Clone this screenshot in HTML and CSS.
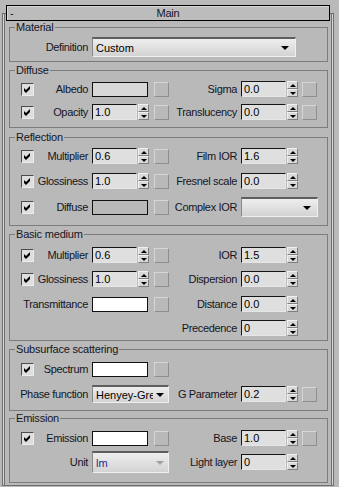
FILE: index.html
```html
<!DOCTYPE html>
<html lang="en">
<head>
    <meta charset="UTF-8">
    <title>Main</title>
    <link rel="stylesheet" href="styles.css">
</head>
<body>
    <div class="frame">
        <div class="title">
            <span class="minus">-</span>
            <span>Main</span>
            <span></span>
        </div>

        <fieldset class="group g-material">
            <legend>Material</legend>
            <div class="row h20">
                <span class="lab wide">Definition</span>
                <div class="drop w-def"><span class="dtext">Custom</span><i class="tri"></i></div>
            </div>
        </fieldset>

        <fieldset class="group g-diffuse">
            <legend>Diffuse</legend>
            <div class="row">
                <span class="chk"><svg width="9" height="9" viewBox="0 0 9 9"><path d="M1 3L3 5L7 1L7 4L3 8L1 6Z" fill="#000"/></svg></span>
                <span class="lab">Albedo</span>
                <span class="swatch gray"></span>
                <span class="map"></span>
                <span class="rlab">Sigma</span>
                <div class="spin rctl"><span class="num">0.0</span><span class="arr"><i class="up"></i><i class="dn"></i></span></div>
                <span class="map rmap"></span>
            </div>
            <div class="row gap7">
                <span class="chk"><svg width="9" height="9" viewBox="0 0 9 9"><path d="M1 3L3 5L7 1L7 4L3 8L1 6Z" fill="#000"/></svg></span>
                <span class="lab">Opacity</span>
                <div class="spin ctl"><span class="num">1.0</span><span class="arr"><i class="up"></i><i class="dn"></i></span></div>
                <span class="map"></span>
                <span class="rlab">Translucency</span>
                <div class="spin rctl"><span class="num">0.0</span><span class="arr"><i class="up"></i><i class="dn"></i></span></div>
                <span class="map rmap"></span>
            </div>
        </fieldset>

        <fieldset class="group g-reflection">
            <legend>Reflection</legend>
            <div class="row">
                <span class="chk"><svg width="9" height="9" viewBox="0 0 9 9"><path d="M1 3L3 5L7 1L7 4L3 8L1 6Z" fill="#000"/></svg></span>
                <span class="lab">Multiplier</span>
                <div class="spin ctl"><span class="num">0.6</span><span class="arr"><i class="up"></i><i class="dn"></i></span></div>
                <span class="map"></span>
                <span class="rlab">Film IOR</span>
                <div class="spin rctl"><span class="num">1.6</span><span class="arr"><i class="up"></i><i class="dn"></i></span></div>
            </div>
            <div class="row gap9">
                <span class="chk"><svg width="9" height="9" viewBox="0 0 9 9"><path d="M1 3L3 5L7 1L7 4L3 8L1 6Z" fill="#000"/></svg></span>
                <span class="lab">Glossiness</span>
                <div class="spin ctl"><span class="num">1.0</span><span class="arr"><i class="up"></i><i class="dn"></i></span></div>
                <span class="map"></span>
                <span class="rlab">Fresnel scale</span>
                <div class="spin rctl"><span class="num">0.0</span><span class="arr"><i class="up"></i><i class="dn"></i></span></div>
            </div>
            <div class="row h20 gap8">
                <span class="chk"><svg width="9" height="9" viewBox="0 0 9 9"><path d="M1 3L3 5L7 1L7 4L3 8L1 6Z" fill="#000"/></svg></span>
                <span class="lab">Diffuse</span>
                <span class="swatch"></span>
                <span class="map"></span>
                <span class="rlab">Complex IOR</span>
                <div class="drop rdrop"><span class="dtext"></span><i class="tri"></i></div>
            </div>
        </fieldset>

        <fieldset class="group g-medium">
            <legend>Basic medium</legend>
            <div class="row">
                <span class="chk"><svg width="9" height="9" viewBox="0 0 9 9"><path d="M1 3L3 5L7 1L7 4L3 8L1 6Z" fill="#000"/></svg></span>
                <span class="lab">Multiplier</span>
                <div class="spin ctl"><span class="num">0.6</span><span class="arr"><i class="up"></i><i class="dn"></i></span></div>
                <span class="map"></span>
                <span class="rlab">IOR</span>
                <div class="spin rctl"><span class="num">1.5</span><span class="arr"><i class="up"></i><i class="dn"></i></span></div>
            </div>
            <div class="row gap8">
                <span class="chk"><svg width="9" height="9" viewBox="0 0 9 9"><path d="M1 3L3 5L7 1L7 4L3 8L1 6Z" fill="#000"/></svg></span>
                <span class="lab">Glossiness</span>
                <div class="spin ctl"><span class="num">1.0</span><span class="arr"><i class="up"></i><i class="dn"></i></span></div>
                <span class="map"></span>
                <span class="rlab">Dispersion</span>
                <div class="spin rctl"><span class="num">0.0</span><span class="arr"><i class="up"></i><i class="dn"></i></span></div>
            </div>
            <div class="row gap9">
                <span class="lab wide">Transmittance</span>
                <span class="swatch white"></span>
                <span class="map"></span>
                <span class="rlab">Distance</span>
                <div class="spin rctl"><span class="num">0.0</span><span class="arr"><i class="up"></i><i class="dn"></i></span></div>
            </div>
            <div class="row gap8">
                <span class="rlab">Precedence</span>
                <div class="spin rctl"><span class="num">0</span><span class="arr"><i class="up"></i><i class="dn"></i></span></div>
            </div>
        </fieldset>

        <fieldset class="group g-sss">
            <legend>Subsurface scattering</legend>
            <div class="row">
                <span class="chk"><svg width="9" height="9" viewBox="0 0 9 9"><path d="M1 3L3 5L7 1L7 4L3 8L1 6Z" fill="#000"/></svg></span>
                <span class="lab">Spectrum</span>
                <span class="swatch white"></span>
                <span class="map"></span>
            </div>
            <div class="row h18 gap8">
                <span class="lab wide">Phase function</span>
                <div class="drop ldrop"><span class="dtext">Henyey-Greenstein</span><i class="tri"></i></div>
                <span class="rlab">G Parameter</span>
                <div class="spin rctl"><span class="num">0.2</span><span class="arr"><i class="up"></i><i class="dn"></i></span></div>
                <span class="map rmap"></span>
            </div>
        </fieldset>

        <fieldset class="group g-emission">
            <legend>Emission</legend>
            <div class="row h15">
                <span class="chk"><svg width="9" height="9" viewBox="0 0 9 9"><path d="M1 3L3 5L7 1L7 4L3 8L1 6Z" fill="#000"/></svg></span>
                <span class="lab">Emission</span>
                <span class="swatch white"></span>
                <span class="map"></span>
                <span class="rlab">Base</span>
                <div class="spin rctl"><span class="num">1.0</span><span class="arr"><i class="up"></i><i class="dn"></i></span></div>
                <span class="map rmap"></span>
            </div>
            <div class="row h22 gap6">
                <span class="lab wide">Unit</span>
                <div class="drop ldrop disabled"><span class="dtext unit">lm</span><i class="tri"></i></div>
                <span class="rlab">Light layer</span>
                <div class="spin rctl"><span class="num">0</span><span class="arr"><i class="up"></i><i class="dn"></i></span></div>
            </div>
        </fieldset>
    </div>
</body>
</html>
```

FILE: styles.css
```css
body {
    margin: 0;
    width: 339px;
    height: 487px;
    overflow: hidden;
    background-color: #b9b9b9;
    color: #15151f;
    font-family: "Liberation Sans", Arial, sans-serif;
    font-size: 11px;
    letter-spacing: -0.2px;
}

.frame {
    box-sizing: border-box;
    width: 332px;
    height: 473px;
    margin: 13px 0 0 2px;
    border: 1px solid #6f6f6f;
    box-shadow: inset 1px 0 0 #d6d6d6, inset 2px 0 0 #6f6f6f, inset -1px 0 0 #d6d6d6, inset -2px 0 0 #6f6f6f;
}

.title {
    box-sizing: border-box;
    height: 16px;
    width: 324px;
    margin: -9px 0 0 3px;
    border: 1px solid #000;
    background-color: #bcbcbc;
    box-shadow: inset 1px 1px 0 #d8d8d8;
    display: grid;
    grid-template-columns: 1fr auto 1fr;
    align-items: center;
    line-height: 13px;
}
.minus {
    padding-left: 3px;
}

/* group boxes */
.group {
    margin: 0 5px 0 6px;
    padding: 0 0 0 5px;
    border: 1px solid #7c7c7c;
    min-width: 0;
}
.group legend {
    padding: 0 1px;
    line-height: 13px;
}
.g-material { padding-top: 3px; padding-bottom: 4px; }
.g-diffuse { margin-top: 2px; padding-top: 4px; padding-bottom: 7px; }
.g-reflection { margin-top: 3px; padding-top: 4px; padding-bottom: 8px; }
.g-medium { margin-top: 2px; padding-top: 6px; padding-bottom: 4px; }
.g-sss { margin-top: 2px; padding-top: 5px; padding-bottom: 7px; }
.g-emission { margin-top: 1px; padding-top: 5px; padding-bottom: 9px; }

.row {
    display: grid;
    grid-template-columns: 13px 58px 62px 15px 72px 61px 15px;
    align-items: center;
    height: 16px;
    margin-left: 6px;
}
.h15 { height: 15px; }
.h18 { height: 18px; }
.h20 { height: 20px; }
.h22 { height: 22px; }
.gap6 { margin-top: 6px; }
.gap7 { margin-top: 7px; }
.gap8 { margin-top: 8px; }
.gap9 { margin-top: 9px; }

/* labels */
.lab, .rlab {
    display: flex;
    justify-content: flex-end;
    white-space: nowrap;
    padding-right: 4px;
    letter-spacing: -0.35px;
}
.lab { grid-column: 2; }
.lab.wide { grid-column: 1 / 3; }
.rlab { grid-column: 5; }

/* checkbox */
.chk {
    grid-column: 1;
    box-sizing: border-box;
    width: 13px;
    height: 13px;
    border: 1px solid;
    border-color: #4c4c4c #ececec #ececec #4c4c4c;
    background-color: #dedede;
    display: flex;
    align-items: center;
    justify-content: center;
}
.chk svg {
    display: block;
}

/* colour swatches */
.swatch {
    grid-column: 3;
    box-sizing: border-box;
    width: 56px;
    height: 15px;
    border: 1px solid #111;
    background-color: #b9b9b9;
}
.swatch.gray { background-color: #d8d8d8; }
.swatch.white { background-color: #fff; }

/* map buttons */
.map {
    grid-column: 4;
    justify-self: end;
    box-sizing: border-box;
    width: 15px;
    height: 15px;
    border: 1px solid;
    border-color: #d6d6d6 #8e8e8e #8e8e8e #d6d6d6;
}
.rmap { grid-column: 7; }

/* spinners */
.spin {
    display: flex;
    gap: 1px;
    height: 16px;
}
.ctl { grid-column: 3; }
.rctl { grid-column: 6; }
.num {
    box-sizing: border-box;
    width: 45px;
    height: 16px;
    padding-left: 2px;
    border: 1px solid;
    border-color: #151515 #e6e6e6 #e6e6e6 #151515;
    background-color: #dfdfdf;
    color: #000;
    line-height: 14px;
    letter-spacing: 0;
}
.arr {
    width: 11px;
    display: flex;
    flex-direction: column;
}
.arr i {
    flex: 1;
    display: flex;
    align-items: center;
    justify-content: center;
    background-color: #d9d9d9;
    border: 1px solid;
    border-color: #f0f0f0 #7e7e7e #7e7e7e #f0f0f0;
}
.arr .up::before {
    content: "";
    border-left: 3px solid transparent;
    border-right: 3px solid transparent;
    border-bottom: 3px solid #000;
}
.arr .dn::before {
    content: "";
    border-left: 3px solid transparent;
    border-right: 3px solid transparent;
    border-top: 3px solid #000;
}

/* dropdowns */
.drop {
    box-sizing: border-box;
    height: 100%;
    display: flex;
    align-items: center;
    padding: 0 6px 0 3px;
    border-style: solid;
    border-width: 2px 1px 1px 1px;
    border-color: #5e5e5e #efefef #efefef #8a8a8a;
    background: linear-gradient(#eeeeee, #d3d3d3);
    color: #000;
    letter-spacing: 0;
}
.w-def {
    grid-column: 3 / 8;
    width: 204px;
}
.rdrop {
    grid-column: 6 / 8;
    width: 77px;
}
.ldrop {
    grid-column: 3 / 5;
    width: 77px;
    padding-right: 4px;
}
.dtext {
    flex: 1;
    overflow: hidden;
    white-space: nowrap;
}
.tri {
    width: 0;
    height: 0;
    margin-left: 3px;
    border-left: 4px solid transparent;
    border-right: 4px solid transparent;
    border-top: 4px solid #000;
}
.disabled .tri {
    border-top-color: #a2a2a2;
}
.unit {
    color: #1c2a8c;
}
```
